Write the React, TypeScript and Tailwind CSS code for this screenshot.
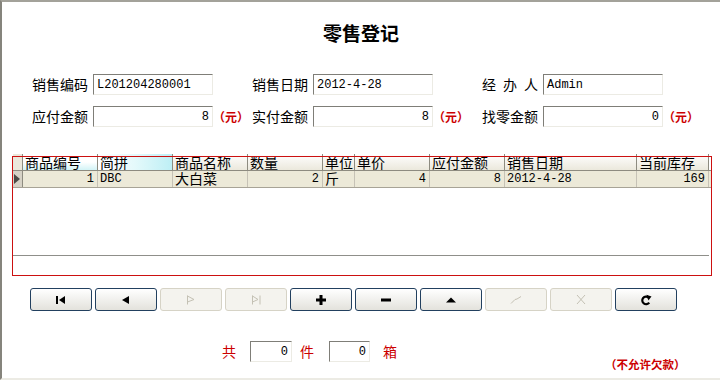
import React from 'react';

const cjk = "[font-family:'Noto_Sans_CJK_SC',sans-serif]";
const mono = "[font-family:'Liberation_Mono',monospace]";

const Field: React.FC<{ value: string; right?: boolean; w?: string }> = ({ value, right, w = 'w-[120px]' }) => (
  <div
    className={`${w} h-[21px] bg-white border-t border-l border-t-[#7f7e78] border-l-[#7f7e78] border-b border-r border-b-[#ecebe4] border-r-[#ecebe4] flex items-center px-[3px] text-[12px] text-black ${mono} ${
      right ? 'justify-end' : 'justify-start'
    }`}
  >
    {value}
  </div>
);

const Yuan = () => <span className="text-[12px] font-bold text-[#cc0000] leading-none">（元）</span>;

const cols = [
  { title: '商品编号', w: 'w-[75px]', value: '1', right: true, bg: 'bg-linear-to-b from-white via-white to-[#d2f3f6]' },
  { title: '简拼', w: 'w-[75px]', value: 'DBC', bg: 'bg-linear-to-r from-white via-[#e4f9fb] to-[#bdeff5]' },
  { title: '商品名称', w: 'w-[75px]', value: '大白菜', cjk: true },
  { title: '数量', w: 'w-[75px]', value: '2', right: true },
  { title: '单位', w: 'w-[32px]', value: '斤', cjk: true },
  { title: '单价', w: 'w-[75px]', value: '4', right: true },
  { title: '应付金额', w: 'w-[75px]', value: '8', right: true },
  { title: '销售日期', w: 'w-[132px]', value: '2012-4-28' },
  { title: '当前库存', w: 'w-[72px]', value: '169', right: true },
];

const dark = '#000000';
const light = '#c4c1b4';

const icons: { on: boolean; svg: React.ReactNode }[] = [
  {
    on: true,
    svg: (
      <svg width="10" height="8" viewBox="0 0 10 8">
        <rect x="0" y="0" width="2" height="8" fill={dark} />
        <polygon points="9,0 3,4 9,8" fill={dark} />
      </svg>
    ),
  },
  {
    on: true,
    svg: (
      <svg width="8" height="8" viewBox="0 0 8 8">
        <polygon points="7,0 0,4 7,8" fill={dark} />
      </svg>
    ),
  },
  {
    on: false,
    svg: (
      <svg width="10" height="10" viewBox="0 0 10 10">
        <path d="M1.5 0.5 V9.5 M1.5 1 L8 4.5 L1.5 7" stroke={light} fill="none" strokeWidth="1" />
      </svg>
    ),
  },
  {
    on: false,
    svg: (
      <svg width="11" height="10" viewBox="0 0 11 10">
        <path d="M1.5 0.5 V9.5 M1.5 1 L7 4.5 L1.5 7 M9 0.5 V9.5" stroke={light} fill="none" strokeWidth="1" />
      </svg>
    ),
  },
  {
    on: true,
    svg: (
      <svg width="10" height="10" viewBox="0 0 10 10">
        <rect x="3.5" y="0" width="3" height="10" fill={dark} />
        <rect x="0" y="3.5" width="10" height="3" fill={dark} />
      </svg>
    ),
  },
  {
    on: true,
    svg: (
      <svg width="10" height="4" viewBox="0 0 10 4">
        <rect x="0" y="0.5" width="10" height="3" fill={dark} />
      </svg>
    ),
  },
  {
    on: true,
    svg: (
      <svg width="10" height="6" viewBox="0 0 10 6">
        <polygon points="0,5.5 5,0.5 10,5.5" fill={dark} />
      </svg>
    ),
  },
  {
    on: false,
    svg: (
      <svg width="12" height="10" viewBox="0 0 12 10">
        <path d="M1 8.5 L5 4.5 L7 4 L11 1.5" stroke={light} fill="none" strokeWidth="1" />
      </svg>
    ),
  },
  {
    on: false,
    svg: (
      <svg width="10" height="11" viewBox="0 0 10 11">
        <path d="M1 1 L9 10 M9 1 L1 10" stroke={light} fill="none" strokeWidth="1" />
      </svg>
    ),
  },
  {
    on: true,
    svg: (
      <svg width="12" height="12" viewBox="0 0 12 12">
        <path d="M8.6 3.6 A3.8 3.8 0 1 0 9.2 8.6" stroke={dark} fill="none" strokeWidth="2.2" />
        <polygon points="6.5,0.8 11.5,2.6 8.4,6.4" fill={dark} />
      </svg>
    ),
  },
];

const App: React.FC = () => {
  return (
    <div
      className={`w-[720px] h-[380px] bg-white border-l-2 border-l-[#85847c] border-t-2 border-t-[#a3a29a] border-b-2 border-b-[#ecebe4] flex flex-col overflow-hidden text-black ${cjk}`}
    >
      <h1 className="pt-[19px] h-[45px] text-center text-[19px] font-bold leading-[24px]">零售登记</h1>

      {/* header fields */}
      <div className="mt-[27px] h-[21px] pl-[30px] flex text-[14px]">
        <div className="w-[220px] flex items-center">
          <span className="w-[56px]">销售编码</span>
          <div className="ml-[5px]">
            <Field value="L201204280001" />
          </div>
        </div>
        <div className="w-[230px] flex items-center">
          <span className="w-[56px]">销售日期</span>
          <div className="ml-[5px]">
            <Field value="2012-4-28" />
          </div>
        </div>
        <div className="flex items-center">
          <span className="w-[56px] flex justify-between">
            <span>经</span>
            <span>办</span>
            <span>人</span>
          </span>
          <div className="ml-[5px]">
            <Field value="Admin" />
          </div>
        </div>
      </div>

      <div className="mt-[11px] h-[21px] pl-[30px] flex text-[14px]">
        <div className="w-[220px] flex items-center">
          <span className="w-[56px]">应付金额</span>
          <div className="ml-[5px]">
            <Field value="8" right />
          </div>
          <Yuan />
        </div>
        <div className="w-[230px] flex items-center">
          <span className="w-[56px]">实付金额</span>
          <div className="ml-[5px]">
            <Field value="8" right />
          </div>
          <Yuan />
        </div>
        <div className="flex items-center">
          <span className="w-[56px]">找零金额</span>
          <div className="ml-[5px]">
            <Field value="0" right />
          </div>
          <Yuan />
        </div>
      </div>

      {/* grid */}
      <div className="mt-[27px] ml-[10px] w-[700px] h-[122px] relative">
        <div className="pl-[1px]">
          <div className="flex h-[17px] border-b border-[#8d8b80]">
            <div className="w-[10px] bg-[#ebe8dc] border-r border-[#8d8b80]" />
            {cols.map((c) => (
              <div
                key={c.title}
                className={`${c.w} ${c.bg ?? 'bg-linear-to-b from-white to-[#ebe8dc]'} border-r border-[#8d8b80] pl-[2px] flex items-center text-[14px] leading-[16px] whitespace-nowrap`}
              >
                {c.title}
              </div>
            ))}
          </div>
          <div className="flex h-[17px] border-b border-[#a7a396] bg-[#ece9d8]">
            <div className="w-[10px] bg-[#d6d2c6] border-r border-[#8d8b80] flex items-center pl-[1px]">
              <svg width="6" height="10" viewBox="0 0 6 10">
                <polygon points="0,0 6,5 0,10" fill="#4a4a46" />
              </svg>
            </div>
            {cols.map((c) => (
              <div
                key={c.title}
                className={`${c.w} border-r border-[#c6c2b6] flex items-center px-[2px] whitespace-nowrap ${
                  c.right ? 'justify-end pr-[3px]' : 'justify-start'
                } ${c.cjk ? 'text-[14px] leading-[14px] pb-[2px]' : `text-[12px] leading-[16px] ${mono}`}`}
              >
                {c.value}
              </div>
            ))}
          </div>
        </div>
        <div className="mt-[67px] w-[697px] h-px bg-[#8f8f8a]" />
        <div className="absolute left-0 top-[2px] w-[700px] h-[120px] border border-[#cc1111] pointer-events-none" />
      </div>

      {/* navigation buttons */}
      <div className="mt-[12px] pl-[28px] flex gap-[3px]">
        {icons.map((b, i) => (
          <div
            key={i}
            className={`w-[62px] h-[23px] rounded-[3px] flex items-center justify-center ${
              b.on
                ? 'border border-[#22405f] bg-linear-to-b from-[#ffffff] to-[#e3e2dc]'
                : 'border border-[#d6d3c6] bg-[#f4f3ee]'
            }`}
          >
            {b.svg}
          </div>
        ))}
      </div>

      {/* totals */}
      <div className="mt-[30px] pl-[220px] flex items-start text-[14px] text-[#cc0000]">
        <span className="h-[21px] leading-[21px]">共</span>
        <div className="ml-[14px]">
          <Field value="0" right w="w-[42px]" />
        </div>
        <span className="ml-[8px] h-[21px] leading-[21px]">件</span>
        <div className="ml-[15px]">
          <Field value="0" right w="w-[41px]" />
        </div>
        <span className="ml-[13px] h-[21px] leading-[21px]">箱</span>
        <span className="ml-[208px] mt-[16px] text-[11.5px] leading-[14px] font-bold">（不允许欠款）</span>
      </div>
    </div>
  );
};

export default App;
